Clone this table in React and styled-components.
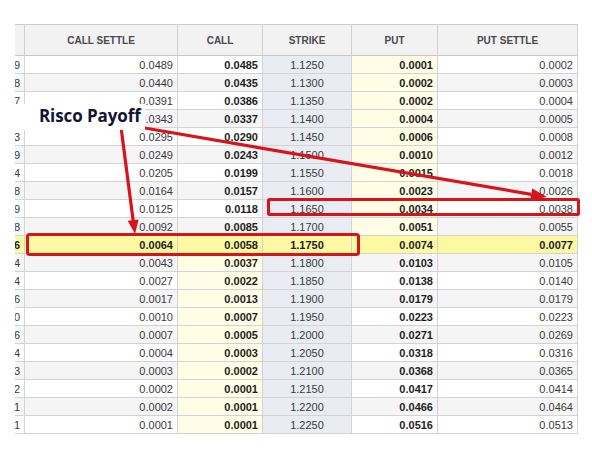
import React from 'react';
import styled, { createGlobalStyle, css } from 'styled-components';

const GlobalStyle = createGlobalStyle`
  html, body {
    margin: 0;
    padding: 0;
    background: #fff;
  }
  body {
    font-family: "Liberation Sans", Arial, sans-serif;
  }
`;

const Page = styled.div`
  position: relative;
  width: 592px;
  height: 452px;
  padding: 24px 0 0 15px;
  box-sizing: border-box;
  overflow: hidden;
  background: #fff;
`;

const Grid = styled.div`
  display: grid;
  grid-template-columns: 10px 153px 85px 89px 86px 140px;
  grid-template-rows: 31px;
  grid-auto-rows: 18px;
  width: 563px;
  border-top: 1px solid #cdcdcd;
`;

const HeadCell = styled.div`
  box-sizing: border-box;
  display: flex;
  align-items: center;
  justify-content: center;
  border-right: 1px solid #d2d2d2;
  border-bottom: 1px solid #c8c8c8;
  background: #f2f2f2;
  color: #4a4a4a;
  font-size: 10px;
  font-weight: 700;
  white-space: nowrap;
  overflow: hidden;
`;

const tones = {
  plain: css`
    background: ${p => (p.$odd ? '#f5f5f5' : '#ffffff')};
  `,
  strike: css`
    background: #e9edf3;
  `,
  itm: css`
    background: #fffde6;
  `,
  hl: css`
    background: #fdf8a2;
  `,
};

const Cell = styled.div`
  box-sizing: border-box;
  display: flex;
  align-items: center;
  justify-content: ${p => (p.$center ? 'center' : 'flex-end')};
  padding: 0 4px;
  border-right: 1px solid #d3d3d3;
  border-bottom: 1px solid #d3d3d3;
  font-size: 11px;
  color: ${p => (p.$bold ? '#1e1e1e' : '#3a3a3a')};
  font-weight: ${p => (p.$bold ? 700 : 400)};
  white-space: nowrap;
  overflow: hidden;
  ${p => tones[p.$tone || 'plain']}
`;

const Overlay = styled.svg`
  position: absolute;
  left: 0;
  top: 0;
  width: 592px;
  height: 452px;
  pointer-events: none;
`;

const Label = styled.div`
  position: absolute;
  left: 15px;
  top: 104px;
  width: 130px;
  height: 26px;
  box-sizing: border-box;
  padding-left: 24px;
  background: #fff;
  font-family: "Open Sans", "Noto Sans", sans-serif;
  font-weight: 700;
  font-size: 17px;
  line-height: 23px;
  letter-spacing: -0.1px;
  color: #111532;
  white-space: nowrap;
`;

const HL = 10;

const rows = [
  ['9', '0.0489', '0.0485', '1.1250', '0.0001', '0.0002'],
  ['8', '0.0440', '0.0435', '1.1300', '0.0002', '0.0003'],
  ['7', '0.0391', '0.0386', '1.1350', '0.0002', '0.0004'],
  ['4', '0.0343', '0.0337', '1.1400', '0.0004', '0.0005'],
  ['3', '0.0295', '0.0290', '1.1450', '0.0006', '0.0008'],
  ['9', '0.0249', '0.0243', '1.1500', '0.0010', '0.0012'],
  ['4', '0.0205', '0.0199', '1.1550', '0.0015', '0.0018'],
  ['8', '0.0164', '0.0157', '1.1600', '0.0023', '0.0026'],
  ['9', '0.0125', '0.0118', '1.1650', '0.0034', '0.0038'],
  ['8', '0.0092', '0.0085', '1.1700', '0.0051', '0.0055'],
  ['6', '0.0064', '0.0058', '1.1750', '0.0074', '0.0077'],
  ['4', '0.0043', '0.0037', '1.1800', '0.0103', '0.0105'],
  ['4', '0.0027', '0.0022', '1.1850', '0.0138', '0.0140'],
  ['6', '0.0017', '0.0013', '1.1900', '0.0179', '0.0179'],
  ['0', '0.0010', '0.0007', '1.1950', '0.0223', '0.0223'],
  ['6', '0.0007', '0.0005', '1.2000', '0.0271', '0.0269'],
  ['4', '0.0004', '0.0003', '1.2050', '0.0318', '0.0316'],
  ['3', '0.0003', '0.0002', '1.2100', '0.0368', '0.0365'],
  ['2', '0.0002', '0.0001', '1.2150', '0.0417', '0.0414'],
  ['1', '0.0002', '0.0001', '1.2200', '0.0466', '0.0464'],
  ['1', '0.0001', '0.0001', '1.2250', '0.0516', '0.0513'],
];

const headers = ['', 'CALL SETTLE', 'CALL', 'STRIKE', 'PUT', 'PUT SETTLE'];

const Row = ({ data, index }) => {
  const [first, callSettle, call, strike, put, putSettle] = data;
  const hl = index === HL;
  const odd = index % 2 === 1;
  const base = hl ? 'hl' : 'plain';
  return (
    <>
      <Cell $tone={base} $odd={odd} $bold={hl}>{first}</Cell>
      <Cell $tone={base} $odd={odd} $bold={hl}>{callSettle}</Cell>
      <Cell $tone={hl ? 'hl' : index > HL ? 'itm' : 'plain'} $odd={odd} $bold>{call}</Cell>
      <Cell $tone={hl ? 'hl' : 'strike'} $center $bold={hl}>{strike}</Cell>
      <Cell $tone={hl ? 'hl' : index < HL ? 'itm' : 'plain'} $odd={odd} $bold>{put}</Cell>
      <Cell $tone={base} $odd={odd} $bold={hl}>{putSettle}</Cell>
    </>
  );
};

const RED = '#d8141b';

export default function App() {
  return (
    <Page>
      <GlobalStyle />
      <Grid>
        {headers.map((h, i) => (
          <HeadCell key={i}>{h}</HeadCell>
        ))}
        {rows.map((r, i) => (
          <Row key={i} data={r} index={i} />
        ))}
      </Grid>
      <Overlay viewBox="0 0 592 452">
        <rect x="27.5" y="234.5" width="331" height="20" rx="2" fill="none" stroke={RED} strokeWidth="3" />
        <rect x="268.5" y="199.5" width="310" height="15" rx="1" fill="none" stroke={RED} strokeWidth="3" />
        {/* arrow down to the highlighted row */}
        <line x1="121" y1="127" x2="133.2" y2="221" stroke={RED} strokeWidth="3.2" />
        <polygon points="127.7,220.8 138.6,219.4 135,234" fill={RED} />
        {/* arrow across to the put settle cell */}
        <line x1="133" y1="126" x2="531.2" y2="194.3" stroke={RED} strokeWidth="3.2" />
        <polygon points="530.2,200.2 532.2,188.4 547,197" fill={RED} />
      </Overlay>
      <Label>Risco Payoff</Label>
    </Page>
  );
}
